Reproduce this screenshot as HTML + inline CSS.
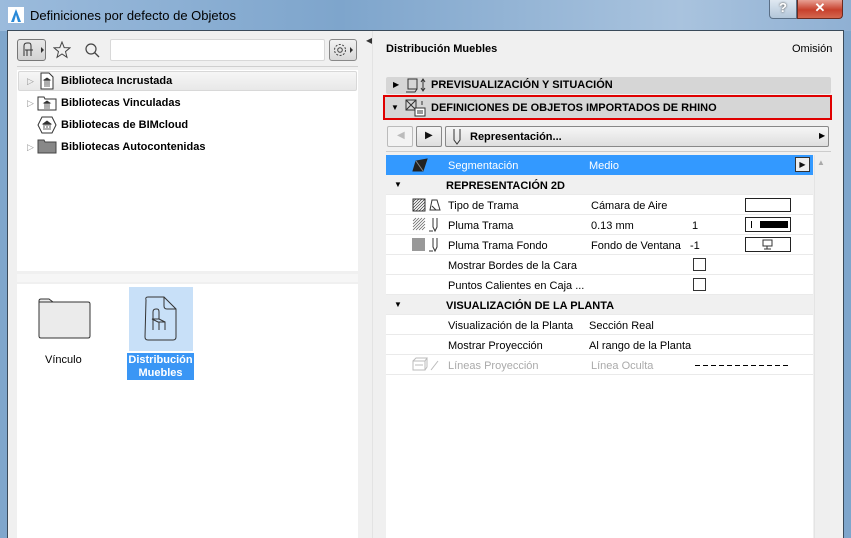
<!DOCTYPE html>
<html><head><meta charset="utf-8"><style>
*{box-sizing:border-box;margin:0;padding:0}
body{width:851px;height:538px;overflow:hidden;font-family:"Liberation Sans",sans-serif;font-size:11px;color:#000;background:#7fa6cc;position:relative}
.a{position:absolute}
.b{font-weight:bold}
.row{position:absolute;left:386px;width:427px;height:20px;border-bottom:1px solid #eaeaea;background:#fff}
.row span{position:absolute;top:5px}
.hdr{background:#f0f0f0}
</style></head><body>
<div class="a" style="left:0;top:0;width:851px;height:31px;background:linear-gradient(90deg,#9bbbdc,#7ea5cc 40%,#a9c3de 80%,#8fb0d3)"></div>
<svg class="a" style="left:8px;top:7px" width="16" height="16"><rect width="16" height="16" fill="#fff"/><path d="M3 15 L8 2 L13 15 Z" fill="#2a8ad8"/><path d="M6 15 L8 8 L10 15Z" fill="#fff"/></svg>
<div class="a" style="left:30px;top:8px;font-size:13px;color:#000">Definiciones por defecto de Objetos</div>
<div class="a" style="left:769px;top:0;width:28px;height:19px;background:linear-gradient(#dfe8f1,#b3c6d9);border:1px solid #5a6f86;border-top:0;border-radius:0 0 0 4px;text-align:center;font-weight:bold;color:#fff;font-size:13px;text-shadow:0 0 2px #333">?</div>
<div class="a" style="left:797px;top:0;width:46px;height:19px;background:linear-gradient(#e8a093,#c7402c 55%,#d4674f);border:1px solid #6b2a20;border-top:0;border-radius:0 0 4px 0;text-align:center;font-weight:bold;color:#fff;font-size:13px">✕</div>
<div class="a" style="left:7px;top:30px;width:837px;height:508px;background:#f0f0f0;border:1px solid #3a4a5a;border-bottom:0"></div>
<div class="a" style="left:17px;top:39px;width:29px;height:22px;border:1px solid #777;border-radius:3px;background:linear-gradient(#e8e8e8,#d2d2d2)"></div>
<svg class="a" style="left:22px;top:42px" width="24" height="16"><path d="M2 14V4Q2 1 5 1H7Q9 1 9 4V8H3M9 8V14M5 8V14M9 8H11" fill="none" stroke="#333"/><path d="M19 5L22 8L19 11Z" fill="#333"/></svg>
<svg class="a" style="left:53px;top:41px" width="18" height="18"><path d="M9 1L11.2 6.6L17 6.8L12.5 10.6L14 16.3L9 13L4 16.3L5.5 10.6L1 6.8L6.8 6.6Z" fill="none" stroke="#444"/></svg>
<svg class="a" style="left:84px;top:42px" width="16" height="16"><circle cx="7" cy="7" r="5" fill="none" stroke="#444" stroke-width="1.2"/><path d="M10.5 10.5L15 15" stroke="#444" stroke-width="1.3"/></svg>
<div class="a" style="left:110px;top:39px;width:215px;height:22px;background:#fff;border:1px solid #d8d8d8;border-radius:2px"></div>
<div class="a" style="left:329px;top:39px;width:28px;height:22px;border:1px solid #888;border-radius:3px;background:linear-gradient(#f2f2f2,#d8d8d8)"></div>
<svg class="a" style="left:332px;top:42px" width="24" height="16"><circle cx="8" cy="8" r="5.5" fill="none" stroke="#444" stroke-dasharray="2 1.5"/><circle cx="8" cy="8" r="2.3" fill="none" stroke="#444"/><path d="M18 5L21 8L18 11Z" fill="#333"/></svg>
<div class="a" style="left:17px;top:66px;width:341px;height:1px;background:#cfcfcf"></div>
<div class="a" style="left:17px;top:70px;width:341px;height:201px;background:#fff"></div>
<div class="a" style="left:18px;top:71px;width:339px;height:20px;background:linear-gradient(#f6f6f6,#e8e8e8);border:1px solid #d8d8d8;border-radius:2px"></div>
<div class="a" style="left:27px;top:76px;color:#999;font-size:9px">▷</div>
<div class="a" style="left:27px;top:98px;color:#999;font-size:9px">▷</div>
<div class="a" style="left:27px;top:142px;color:#999;font-size:9px">▷</div>
<svg class="a" style="left:39px;top:72px" width="16" height="18"><path d="M2 1H10L14 5V17H2Z" fill="#fff" stroke="#333"/><path d="M5 8L8 6L11 8ZM5 9H11M6 10V13M8 10V13M10 10V13M5 14H11" stroke="#333" fill="#333" stroke-width=".8"/></svg>
<svg class="a" style="left:37px;top:95px" width="20" height="16"><path d="M1 2H7L8 4H19V15H1Z" fill="#fff" stroke="#333"/><path d="M7 8L10 6L13 8ZM7 9H13M8 10V12M10 10V12M12 10V12M7 13H13" stroke="#333" fill="#333" stroke-width=".8"/></svg>
<svg class="a" style="left:37px;top:116px" width="20" height="18"><path d="M5 1H15L19 9L15 17H5L1 9Z" fill="#fff" stroke="#333"/><path d="M6 8L10 5L14 8ZM6 9H14M7 10V12M10 10V12M13 10V12M6 13H14" stroke="#333" fill="#333" stroke-width=".8"/></svg>
<svg class="a" style="left:37px;top:138px" width="20" height="16"><path d="M1 2H7L8 4H19V15H1Z" fill="#888" stroke="#444"/></svg>
<div class="a b" style="left:61px;top:75px">Biblioteca Incrustada</div>
<div class="a b" style="left:61px;top:97px">Bibliotecas Vinculadas</div>
<div class="a b" style="left:61px;top:119px">Bibliotecas de BIMcloud</div>
<div class="a b" style="left:61px;top:141px">Bibliotecas Autocontenidas</div>
<div class="a" style="left:17px;top:274px;width:341px;height:8px;background:#f6f6f6"></div>
<div class="a" style="left:17px;top:284px;width:341px;height:254px;background:#fff"></div>
<svg class="a" style="left:38px;top:298px" width="53" height="42"><path d="M1 3Q1 1 3 1H11L15 4H50Q52 4 52 6V38Q52 40 50 40H3Q1 40 1 38Z" fill="#ebebeb" stroke="#333"/><path d="M1 4H15" stroke="#333"/></svg>
<div class="a" style="left:45px;top:354px">Vínculo</div>
<div class="a" style="left:129px;top:287px;width:64px;height:64px;background:#c8e0f8"></div>
<svg class="a" style="left:144px;top:296px" width="34" height="46"><path d="M2 4Q1 1 4 1H20L32 13V41Q32 44 29 44H4Q1 44 1 41Z" fill="none" stroke="#333"/><path d="M20 1V10Q20 13 23 13H32" fill="none" stroke="#333"/><path d="M9 29V16Q9 13 12 13H13Q15 13 15 16V23H8L14 26H21V34M21 26L15 23M9 29V34M15 26V34M9 26V29" fill="none" stroke="#333"/></svg>
<div class="a b" style="left:127px;top:353px;width:67px;height:27px;background:#3a96f5;color:#fff;text-align:center;line-height:13px;padding-top:1px">Distribución<br>Muebles</div>
<div class="a" style="left:366px;top:36px;color:#333;font-size:8px">◀</div>
<div class="a" style="left:372px;top:31px;width:1px;height:507px;background:#e3e3e3"></div>
<div class="a b" style="left:386px;top:43px">Distribución Muebles</div>
<div class="a" style="left:792px;top:43px">Omisión</div>
<div class="a" style="left:386px;top:77px;width:445px;height:17px;background:#d6d6d6;border-radius:2px"></div>
<div class="a" style="left:393px;top:80px;font-size:8px">▶</div>
<svg class="a" style="left:405px;top:77px" width="22" height="17"><rect x="3" y="2" width="9" height="10" fill="none" stroke="#333"/><path d="M1 15H10L12 12" fill="none" stroke="#333"/><path d="M18 3V13M16 5L18 2L20 5M16 11L18 14L20 11" fill="none" stroke="#333"/></svg>
<div class="a b" style="left:431px;top:79px">PREVISUALIZACIÓN Y SITUACIÓN</div>
<div class="a" style="left:383px;top:95px;width:449px;height:25px;border:2px solid #e00000;background:#d6d6d6"></div>
<div class="a" style="left:391px;top:103px;font-size:8px">▼</div>
<svg class="a" style="left:405px;top:98px" width="22" height="20"><rect x="1" y="2" width="10" height="10" fill="none" stroke="#333"/><path d="M1 2L11 12M11 2L1 12" stroke="#333"/><rect x="10" y="10" width="10" height="8" fill="#fff" stroke="#333"/><path d="M12 13H18M12 15H18" stroke="#333"/><path d="M17 3V7" stroke="#333"/></svg>
<div class="a b" style="left:431px;top:102px">DEFINICIONES DE OBJETOS IMPORTADOS DE RHINO</div>
<div class="a" style="left:387px;top:126px;width:26px;height:21px;border:1px solid #bbb;border-radius:2px;background:#f3f3f3"></div>
<div class="a" style="left:397px;top:130px;color:#bbb;font-size:10px">◀</div>
<div class="a" style="left:416px;top:126px;width:26px;height:21px;border:1px solid #888;border-radius:2px;background:linear-gradient(#f6f6f6,#dedede)"></div>
<div class="a" style="left:425px;top:130px;color:#111;font-size:10px">▶</div>
<div class="a" style="left:445px;top:126px;width:384px;height:21px;border:1px solid #888;border-radius:2px;background:linear-gradient(#f6f6f6,#dedede)"></div>
<svg class="a" style="left:452px;top:128px" width="10" height="18"><path d="M2 1V12L5 16L8 12V1" fill="none" stroke="#333"/></svg>
<div class="a b" style="left:470px;top:131px">Representación...</div>
<div class="a" style="left:819px;top:131px;font-size:8px">▶</div>
<div class="a" style="left:386px;top:151px;width:445px;height:1px;background:#ccc"></div>
<div class="a" style="left:386px;top:155px;width:427px;height:383px;background:#fff"></div>
<div class="a" style="left:814px;top:155px;width:16px;height:383px;background:#efefef;border-left:1px solid #e4e4e4"></div>
<div class="a" style="left:817px;top:158px;color:#aaa;font-size:8px">▲</div>
<div class="row" style="top:155px;background:#3399ff;color:#fff;border:0"><span style="left:62px">Segmentación</span><span style="left:203px">Medio</span></div>
<svg class="a" style="left:411px;top:157px" width="18" height="16"><path d="M2 14L5 4L16 2L12 14Z" fill="#222" stroke="#222"/><path d="M5 4L12 14" stroke="#888"/></svg>
<div class="a" style="left:795px;top:157px;width:15px;height:15px;background:#eee;border:1px solid #333;font-size:8px;color:#111;text-align:center;line-height:13px">▶</div>
<div class="row hdr" style="top:175px"><span style="left:8px;font-size:8px;top:5px">▼</span><span class="b" style="left:60px">REPRESENTACIÓN 2D</span></div>
<div class="row" style="top:195px"><span style="left:62px">Tipo de Trama</span><span style="left:205px">Cámara de Aire</span></div>
<svg class="a" style="left:412px;top:198px" width="30" height="14"><rect x="1" y="1" width="12" height="12" fill="none" stroke="#333"/><path d="M1 7L7 1M1 13L13 1M7 13L13 7M4 13L13 4M1 10L10 1M1 4L4 1M10 13L13 10" stroke="#333" stroke-width=".7"/><path d="M18 12L20 2H25L28 12ZM20 8L24 12" fill="none" stroke="#333"/></svg>
<div class="a" style="left:745px;top:198px;width:46px;height:14px;border:1px solid #222;background:#fff"></div>
<div class="row" style="top:215px"><span style="left:62px">Pluma Trama</span><span style="left:205px">0.13 mm</span><span style="left:306px">1</span></div>
<svg class="a" style="left:412px;top:217px" width="30" height="16"><path d="M1 7L7 1M1 13L13 1M7 13L13 7M4 13L13 4M1 10L10 1M1 4L4 1M10 13L13 10" stroke="#666" stroke-width=".8"/><path d="M21 1V10L23 14L25 10V1M17 14H21" fill="none" stroke="#333"/></svg>
<div class="a" style="left:745px;top:217px;width:46px;height:15px;border:1px solid #222;background:#fff"><div class="a" style="left:5px;top:3px;width:1px;height:7px;background:#000"></div><div class="a" style="left:14px;top:3px;width:28px;height:7px;background:#000"></div></div>
<div class="row" style="top:235px"><span style="left:62px">Pluma Trama Fondo</span><span style="left:205px">Fondo de Ventana</span><span style="left:304px">-1</span></div>
<div class="a" style="left:412px;top:238px;width:13px;height:13px;background:#999"></div>
<svg class="a" style="left:428px;top:237px" width="14" height="16"><path d="M5 1V10L7 14L9 10V1M1 14H5" fill="none" stroke="#333"/></svg>
<div class="a" style="left:745px;top:237px;width:46px;height:15px;border:1px solid #222;background:#fff"></div>
<svg class="a" style="left:761px;top:239px" width="14" height="12"><rect x="2" y="1" width="9" height="6" fill="none" stroke="#333"/><path d="M6 7V10M3 10H10" stroke="#333"/></svg>
<div class="row" style="top:255px"><span style="left:62px">Mostrar Bordes de la Cara</span></div>
<div class="a" style="left:693px;top:258px;width:13px;height:13px;border:1px solid #333;background:#fff"></div>
<div class="row" style="top:275px"><span style="left:62px">Puntos Calientes en Caja ...</span></div>
<div class="a" style="left:693px;top:278px;width:13px;height:13px;border:1px solid #333;background:#fff"></div>
<div class="row hdr" style="top:295px"><span style="left:8px;font-size:8px;top:5px">▼</span><span class="b" style="left:60px">VISUALIZACIÓN DE LA PLANTA</span></div>
<div class="row" style="top:315px"><span style="left:62px">Visualización de la Planta</span><span style="left:203px">Sección Real</span></div>
<div class="row" style="top:335px"><span style="left:62px">Mostrar Proyección</span><span style="left:203px">Al rango de la Planta</span></div>
<div class="row" style="top:355px;color:#aaa"><span style="left:62px">Líneas Proyección</span><span style="left:205px">Línea Oculta</span></div>
<div class="a" style="left:695px;top:365px;width:96px;height:1px;background:repeating-linear-gradient(90deg,#000 0 5px,transparent 5px 8px)"></div>
<svg class="a" style="left:411px;top:357px" width="30" height="16"><rect x="2" y="4" width="12" height="9" fill="none" stroke="#bbb"/><path d="M2 4L5 1H16L14 4M16 1V10L14 13M4 8H12" fill="none" stroke="#bbb"/><path d="M20 13L27 4" stroke="#bbb"/></svg>
</body></html>
